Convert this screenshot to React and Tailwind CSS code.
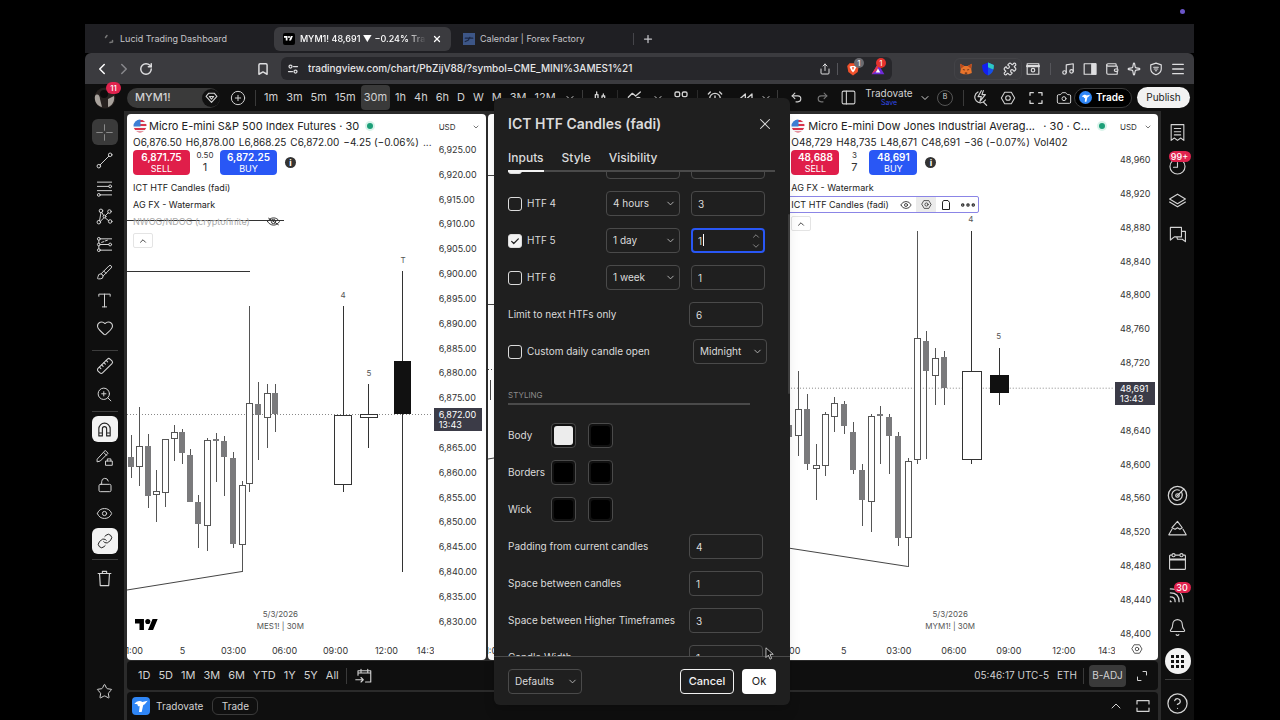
import {
  AlarmClock, Bell, Bookmark, Brush, Camera, ChevronDown, ChevronLeft, ChevronRight, ChevronUp,
  CirclePlus, Eye, Heart, HelpCircle, Layers, Link, LockOpen, Magnet, Menu,
  MessagesSquare, Music, PanelLeft, Puzzle, Redo2, RotateCw, Rss, Ruler, Share, Sparkle,
  Star, Target, Trash2, Undo2, Wallet, X, Plus, ZoomIn, Calendar,
} from 'lucide-react';

const TIMEFRAMES = ['1m', '3m', '5m', '15m', '30m', '1h', '4h', '6h', 'D', 'W', 'M', '3M', '12M'];
const RANGES = ['1D', '5D', '1M', '3M', '6M', 'YTD', '1Y', '5Y', 'All'];

// [x, open/close top, open/close bottom, high, low, filled]
const MES_CANDLES = [
  [4, 343, 353, 321, 364, 1], [12, 332, 353, 293, 372, 0], [21, 332, 382, 320, 394, 1],
  [29, 377, 381, 356, 408, 0], [38, 325, 379, 325, 393, 0], [47, 318, 325, 311, 347, 0],
  [55, 318, 339, 315, 350, 1], [63, 341, 388, 335, 388, 1], [71, 388, 410, 381, 434, 1],
  [80, 326, 412, 324, 437, 0], [89, 325, 327, 319, 368, 1], [97, 327, 343, 322, 382, 1],
  [106, 344, 430, 338, 434, 1], [115, 371, 431, 367, 458, 0], [122, 289, 370, 192, 378, 0],
  [131, 290, 301, 268, 346, 1], [140, 279, 304, 270, 334, 0], [148, 279, 300, 270, 318, 1],
];

const MYM_CANDLES = [
  [4, 311, 323, 290, 340, 1], [13, 295, 322, 257, 342, 0], [22, 295, 350, 280, 356, 1],
  [31, 351, 355, 330, 386, 0], [40, 300, 352, 298, 362, 0], [49, 289, 303, 283, 318, 0],
  [59, 290, 312, 287, 320, 1], [68, 318, 356, 308, 360, 1], [77, 356, 386, 350, 412, 1],
  [86, 302, 388, 300, 418, 0], [95, 300, 302, 292, 350, 1], [104, 303, 322, 300, 360, 1],
  [113, 322, 424, 318, 432, 1], [123, 347, 424, 344, 453, 0], [132, 224, 346, 117, 350, 0],
  [141, 227, 257, 217, 345, 1], [150, 244, 262, 234, 291, 0], [159, 243, 274, 237, 291, 1],
];

const MES_PRICES = ['6,925.00', '6,920.00', '6,915.00', '6,910.00', '6,905.00', '6,900.00', '6,895.00', '6,890.00', '6,885.00', '6,880.00', '6,875.00', '', '6,865.00', '6,860.00', '6,855.00', '6,850.00', '6,845.00', '6,840.00', '6,835.00', '6,830.00'];
const MYM_PRICES = ['48,960', '48,920', '48,880', '48,840', '48,800', '48,760', '48,720', '', '48,640', '48,600', '48,560', '48,520', '48,480', '48,440', '48,400'];

function Glyph({ children, className = 'size-5', w = 1.4 }) {
  return (
    <svg viewBox="0 0 24 24" fill="none" stroke="currentColor" strokeWidth={w} strokeLinecap="round" strokeLinejoin="round" className={className} aria-hidden="true">
      {children}
    </svg>
  );
}

function TvLogo({ className }) {
  return (
    <svg viewBox="0 4 36 18" fill="currentColor" className={className} aria-hidden="true">
      <path d="M14 22H7V11H0V4h14v18zM28 22h-8l7.5-18h8L28 22z" />
      <circle cx="20" cy="8" r="4" />
    </svg>
  );
}

function TradovateLogo({ className }) {
  return (
    <svg viewBox="0 0 24 24" className={className} aria-hidden="true">
      <path fill="#fff" d="M2 9c3-5 9-6 12-3l8-2-4 5c-1 1-3 1-3 3l-2 9H9l1-9c-2 1-3 0-3-2-1-1-3-1-5-1z" />
    </svg>
  );
}

function Flag() {
  return (
    <svg viewBox="0 0 14 14" className="size-[14px] shrink-0" aria-hidden="true">
      <clipPath id="flag"><circle cx="7" cy="7" r="6.5" /></clipPath>
      <g clipPath="url(#flag)">
        <path fill="#f4f4f6" d="M0 0h14v14H0z" />
        <path fill="#d8334a" d="M7 1h7v2H7zM7 5h7v2H7zM0 9h14v2H0zM0 12.500h14V14H0z" />
        <path fill="#3d7fd6" d="M0 0h7.500v7.500H0z" />
      </g>
    </svg>
  );
}

function HexIcon({ className }) {
  return (
    <Glyph className={className} w={1.6}>
      <path d="M7 3.500h10L22 12l-5 8.500H7L2 12z" />
      <circle cx="12" cy="12" r="3.500" />
    </Glyph>
  );
}

function Tool({ label, active, children }) {
  return (
    <button
      aria-label={label}
      className={`flex h-7 w-[26px] shrink-0 items-center justify-center ${active ? 'text-[#222]' : 'text-[#d4d4d4]'}`}
    >
      {active ? <span className="flex size-[26px] items-center justify-center rounded-md bg-[#f2f2f2]">{children}</span> : children}
    </button>
  );
}

function BrowserTabs() {
  return (
    <div className="flex h-[29px] shrink-0 items-center bg-[#1f1f23] text-[9px] text-[#c4c4c8]">
      <div className="flex w-[189px] items-center pl-[18px]">
        <Glyph className="size-3 text-[#777]" w={3}><path d="M5 9l3-4M14 19l5-1v-3" /></Glyph>
        <span className="ml-[5px]">Lucid Trading Dashboard</span>
      </div>
      <div className="flex h-6 w-[177px] items-center rounded-md bg-[#3b3b3f] px-[9px] text-white">
        <span className="flex size-3 items-center justify-center rounded-xs bg-black"><TvLogo className="w-[9px]" /></span>
        <span className="ml-[5px] w-[127px] overflow-hidden font-medium whitespace-nowrap mask-r-from-85%">MYM1! 48,691 ▼ −0.24% Trado</span>
        <button aria-label="Close tab" className="ml-[6px]"><X className="size-[10px]" strokeWidth={3} /></button>
      </div>
      <div className="flex w-[182px] items-center pl-3">
        <span className="flex size-3 items-center justify-center bg-[#3d5687]">
          <Glyph className="size-[10px] text-[#1b2744]" w={3}><path d="M3 10h18M3 18l7-3 4-7" /></Glyph>
        </span>
        <span className="ml-[5px]">Calendar | Forex Factory</span>
      </div>
      <div className="h-3 w-px bg-[#45454a]" />
      <button aria-label="New tab" className="ml-2"><Plus className="size-3" strokeWidth={2.500} /></button>
    </div>
  );
}

function AddressBar() {
  return (
    <div className="flex h-[31px] shrink-0 items-center rounded-t-md bg-[#3b3b3f] text-[#dedee0]">
      <div className="flex w-[196px] items-center pl-[6px]">
        <button aria-label="Back" className="w-[22px]"><ChevronLeft className="mx-auto size-[18px] text-white" /></button>
        <button aria-label="Forward" className="w-[22px]"><ChevronRight className="mx-auto size-[18px] text-[#88888c]" /></button>
        <button aria-label="Reload" className="w-[22px]"><RotateCw className="mx-auto size-[14px]" strokeWidth={2.500} /></button>
        <button aria-label="Bookmark" className="ml-auto mr-[11px]"><Bookmark className="size-[14px]" strokeWidth={2.500} /></button>
      </div>
      <div className="flex h-[23px] w-[611px] items-center rounded-md bg-[#27272b] pl-[6px]">
        <Glyph className="size-3 shrink-0" w={2.500}>
          <circle cx="7" cy="7" r="3" /><path d="M13 7h8M3 17h8" /><circle cx="17" cy="17" r="3" />
        </Glyph>
        <input aria-label="Address" readOnly value="tradingview.com/chart/PbZijV88/?symbol=CME_MINI%3AMES1%21" className="ml-[9px] min-w-0 flex-1 bg-transparent text-[10px] font-medium text-[#e6e6e8] outline-none" />
        <Share className="mr-[6px] size-3" />
        <div className="h-3 w-px bg-[#55555a]" />
        <div className="relative ml-2 w-[25px]">
          <svg viewBox="0 0 24 24" className="size-[14px]" aria-hidden="true">
            <path fill="#f0512b" d="M6 2h12l4 5-2 10-8 6-8-6L2 7z" /><path fill="#fff" d="M6 8l3-1h6l3 1-3 6-3 4-3-4z" /><path fill="#f0512b" d="M10 9h4l-2 5z" />
          </svg>
          <span className="absolute -top-1 left-2 flex size-[10px] items-center justify-center rounded-full bg-[#6b6b70] text-[8px] text-white">1</span>
        </div>
        <div className="relative mr-[6px] w-[15px]">
          <svg viewBox="0 0 24 24" className="size-[14px]" aria-hidden="true">
            <path fill="#6e2ad8" d="M12 3L1 21h22z" /><path fill="#e0364c" d="M12 3L1 21l11-8z" /><path fill="#fff" d="M12 11l-4 7h8z" />
          </svg>
          <span className="absolute -top-1 left-[5px] flex size-[10px] items-center justify-center rounded-full bg-[#e5322d] text-[8px] text-white">1</span>
        </div>
      </div>
      <div className="ml-auto flex items-center pr-[5px]">
        <div className="flex rounded-md border border-[#434347]">
          <span className="flex h-5 w-[22px] items-center justify-center">
            <svg viewBox="0 0 24 24" className="size-[14px]" aria-hidden="true">
              <path fill="#e8742c" d="M2 3l7 4h6l7-4-1 9 1 7-6 2H8l-6-2 1-7z" /><path fill="#5c2b16" d="M6 12l4 1-1 2zM18 12l-4 1 1 2zM10 18h4v2h-4z" /><path fill="#b8481d" d="M2 3l7 4-5 4zM22 3l-7 4 5 4z" />
            </svg>
          </span>
          <span className="flex h-5 w-[22px] items-center justify-center">
            <svg viewBox="0 0 24 24" className="size-[14px]" aria-hidden="true">
              <path fill="#1220f0" d="M12 1v22C5 20 2 16 2 5z" /><path fill="#1650e8" d="M12 1l10 4c0 11-3 15-10 18z" /><path fill="#2fc8c0" d="M12 1l10 4c0 3 0 5-1 8l-9-4z" />
            </svg>
          </span>
          <span className="flex h-5 w-[22px] items-center justify-center"><Puzzle className="size-[14px]" /></span>
        </div>
        <span className="flex w-[22px] justify-center">
          <Glyph className="size-[14px]" w={2}><rect x="2" y="3" width="20" height="18" /><path d="M2 7h20" strokeWidth="4" /><circle cx="12" cy="14" r="3" /></Glyph>
        </span>
        <div className="mx-[6px] h-3 w-px bg-[#55555a]" />
        <button aria-label="Media" className="w-[22px]"><Music className="mx-auto size-[14px]" /></button>
        <button aria-label="Sidebar" className="w-[22px]">
          <Glyph className="mx-auto size-[14px]" w={2}><rect x="2" y="3" width="20" height="18" /><path d="M15 3h7v18h-7z" fill="currentColor" /></Glyph>
        </button>
        <button aria-label="Wallet" className="w-[22px]"><Wallet className="mx-auto size-[14px]" /></button>
        <button aria-label="Assistant" className="w-[22px]"><Sparkle className="mx-auto size-[14px]" /></button>
        <button aria-label="VPN" className="w-[22px]">
          <Glyph className="mx-auto size-[14px]" w={2}><path d="M12 2l9 3v7c0 5-4 8-9 10-5-2-9-5-9-10V5zM8 9h8M9 12h6M11 15h2" /></Glyph>
        </button>
        <button aria-label="Menu" className="w-[22px]"><Menu className="mx-auto size-[16px]" /></button>
      </div>
    </div>
  );
}

function ChartToolbar() {
  return (
    <div className="flex h-[27px] shrink-0 items-center bg-[#0f0f0f] text-[11px] text-[#d2d2d2]">
      <div className="relative ml-[9px] size-[22px] shrink-0 overflow-visible">
        <svg viewBox="0 0 22 22" className="size-full" aria-hidden="true">
          <circle cx="11" cy="11" r="10.500" fill="#27211f" /><path fill="#a8a29c" d="M1 9c2-3 5-1 5 3l2 8C3 19 0 14 1 9zM14 12l6-3c1 5-2 10-6 11z" /><circle cx="10" cy="7" r="4" fill="#0d0c0c" />
        </svg>
        <span className="absolute -top-[5px] left-[12px] flex h-3 w-[15px] items-center justify-center rounded-full bg-[#e0234e] text-[8px] font-medium text-white">11</span>
      </div>
      <button className="ml-[11px] flex h-5 w-[93px] shrink-0 items-center justify-between rounded-full bg-[#3a3a3a] pl-2 font-medium">
        MYM1!
        <span className="flex size-[18px] items-center justify-center rounded-full bg-[#111]">
          <Glyph className="size-[13px]" w={2}><path d="M7 4h10l5 6-10 11L2 10z" /><path d="M8 10h8l-4 5z" /></Glyph>
        </span>
      </button>
      <button aria-label="Compare" className="ml-[10px]"><CirclePlus className="size-4" strokeWidth={1.500} /></button>
      <div className="mr-1 ml-[9px] h-4 w-px bg-[#3a3a3a]" />
      <div className="flex w-[304px] shrink-0 items-center">
        {TIMEFRAMES.map((t) => (
          <button key={t} className={t === '30m' ? 'mx-px h-[25px] rounded-sm bg-[#3a3a3a] px-[3px]' : 'h-[25px] px-1'}>{t}</button>
        ))}
      </div>
      <ChevronDown className="size-3" />
      <div className="ml-[6px] h-4 w-px bg-[#3a3a3a]" />
      <span className="flex w-[34px] justify-center">
        <Glyph className="size-4" w={2}><path d="M5 7h4v10H5zM15 9h4v6h-4zM7 3v4M7 17v4M17 6v3M17 15v3" /></Glyph>
      </span>
      <div className="h-4 w-px bg-[#2a2a2a]" />
      <span className="flex w-[34px] justify-center">
        <Glyph className="size-4" w={2}><path d="M2 11l6-6 5 4 7-6" /><circle cx="17" cy="14" r="3" /></Glyph>
      </span>
      <ChevronDown className="size-3" />
      <span className="flex w-[33px] justify-center">
        <Glyph className="size-4" w={2}><rect x="3" y="3" width="7" height="7" rx="2" /><rect x="14" y="3" width="7" height="7" rx="2" /><rect x="3" y="14" width="7" height="7" /></Glyph>
      </span>
      <div className="h-4 w-px bg-[#2a2a2a]" />
      <span className="flex w-[34px] justify-center"><AlarmClock className="size-4" /></span>
      <span className="flex w-[28px] justify-center">
        <Glyph className="size-4" w={2}><path d="M11 6l-8 7h8zM21 6l-8 7h8z" /></Glyph>
      </span>
      <ChevronDown className="size-3" />
      <div className="mx-[5px] h-4 w-px bg-[#3a3a3a]" />
      <button aria-label="Undo" className="w-[26px]"><Undo2 className="mx-auto size-[13px]" /></button>
      <button aria-label="Redo" className="w-[26px]"><Redo2 className="mx-auto size-[13px] text-[#777]" /></button>

      <div className="ml-auto flex shrink-0 items-center pr-1">
        <PanelLeft className="size-[17px]" strokeWidth={1.500} />
        <button className="ml-2 flex w-12 flex-col items-center text-[10px] leading-[11px]">
          Tradovate<span className="text-[7px] leading-[8px] text-[#2f49e8]">Save</span>
        </button>
        <ChevronDown className="ml-[6px] size-3" />
        <span className="ml-[6px] flex size-4 items-center justify-center rounded-full border border-[#555] text-[7px]">B</span>
        <div className="ml-[10px] mr-[2px] h-4 w-px bg-[#3a3a3a]" />
        <button aria-label="Replay" className="w-7">
          <Glyph className="mx-auto size-4" w={1.800}><path d="M9 3a8.500 8.500 0 1 0 11 12M17 18l5 5M14 1L9 10h5l-2 7 8-10h-5l2-6" /></Glyph>
        </button>
        <button aria-label="Settings" className="w-7"><HexIcon className="mx-auto size-4" /></button>
        <button aria-label="Fullscreen" className="w-7">
          <Glyph className="mx-auto size-4" w={2}><path d="M3 8V4h5M16 4h5v4M21 16v4h-5M8 20H3v-4" /></Glyph>
        </button>
        <button aria-label="Snapshot" className="-mr-1 w-7"><Camera className="mx-auto size-4" strokeWidth={1.500} /></button>
        <button className="flex h-5 w-[58px] items-center rounded-full border border-[#3a3a3a] bg-black pl-1 text-[10px] font-semibold text-white">
          <span className="mr-1 flex size-[13px] items-center justify-center rounded-full bg-[#2f86f6]"><TradovateLogo className="size-[10px]" /></span>
          Trade
        </button>
        <button className="ml-[5px] h-[21px] w-[53px] rounded-full bg-[#f2f2f2] text-[10px] text-[#222]">Publish</button>
      </div>
    </div>
  );
}

function DrawingTools() {
  const s = 'size-[17px]';
  return (
    <div className="flex w-[39px] shrink-0 flex-col items-center bg-[#0f0f0f] pt-[7px]">
      <button aria-label="Cursor" className="flex h-7 items-center">
        <span className="flex size-[26px] items-center justify-center rounded-md bg-[#3a3a3a] text-[#8c8c8c]">
          <Glyph className={s}><path d="M12 1v8M12 15v8M1 12h8M15 12h8" /></Glyph>
        </span>
      </button>
      <Tool label="Trend line"><Glyph className={s}><path d="M6 18L18 6" /><circle cx="4" cy="20" r="2.500" /><circle cx="20" cy="4" r="2.500" /></Glyph></Tool>
      <Tool label="Fibonacci"><Glyph className={s}><path d="M2 3h20M2 9h16M2 15h20M6 21h16" /><circle cx="20" cy="9" r="2" /><circle cx="4" cy="21" r="2" /></Glyph></Tool>
      <Tool label="Patterns"><Glyph className={s}><circle cx="4" cy="20" r="2.500" /><circle cx="7" cy="4" r="2.500" /><circle cx="19" cy="5" r="2.500" /><circle cx="20" cy="19" r="2.500" /><circle cx="12" cy="12" r="2" /><path d="M5 18L7 6.500M8 6l3 5M17 7l-4 4M6 19l5-5M13 14l5 4" /></Glyph></Tool>
      <Tool label="Forecast"><Glyph className={s}><path d="M6 4h16M6 20h16M4 6v4M4 14v4M6 12h12" strokeDasharray="none" /><circle cx="4" cy="4" r="2" /><circle cx="4" cy="12" r="2" /><circle cx="4" cy="20" r="2" /><circle cx="20" cy="12" r="2" /><path d="M8 9l3-1M13 7l3-1" /></Glyph></Tool>
      <Tool label="Brush"><Brush className={s} strokeWidth={1.400} /></Tool>
      <Tool label="Text"><Glyph className={s}><path d="M4 6V3h16v3M12 3v18M9 21h6" /></Glyph></Tool>
      <Tool label="Icons"><Heart className="size-[18px]" strokeWidth={1.400} /></Tool>
      <div className="mt-2 mb-px h-px w-[26px] shrink-0 bg-[#3d3d3d]" />
      <Tool label="Measure"><Ruler className="size-[18px] -scale-x-100" strokeWidth={1.400} /></Tool>
      <Tool label="Zoom in"><ZoomIn className={s} strokeWidth={1.400} /></Tool>
      <div className="my-[3px] h-px w-[26px] shrink-0 bg-[#3d3d3d]" />
      <Tool label="Magnet" active><Glyph className="size-[17px]" w={1.600}><path d="M4 21V11a8 8 0 0 1 16 0v10h-5V11a3 3 0 0 0-6 0v10zM4 17h5M15 17h5" /></Glyph></Tool>
      <Tool label="Stay in drawing mode">
        <Glyph className={s}><path d="M2 14L13 2l4 4L6 17l-4 1zM11 5l4 4" /><rect x="14" y="17" width="9" height="6" /><path d="M16 17v-3h5v3" /></Glyph>
      </Tool>
      <Tool label="Lock drawings"><LockOpen className="size-4" strokeWidth={1.500} /></Tool>
      <Tool label="Hide drawings"><Eye className={s} strokeWidth={1.400} /></Tool>
      <Tool label="Link" active><Link className="size-4" strokeWidth={1.500} /></Tool>
      <div className="my-1 h-px w-[26px] shrink-0 bg-[#3d3d3d]" />
      <Tool label="Remove">
        <Glyph className={s} w={1.600}><path d="M3 5h18M9 5V2h6v3M5 5l1 17h12l1-17" /></Glyph>
      </Tool>
      <div className="mt-auto mb-[15px]"><Tool label="Favorites"><Star className={s} strokeWidth={1.400} /></Tool></div>
    </div>
  );
}

function SideWidgets() {
  const s = 'size-[19px]';
  return (
    <div className="flex w-[33px] shrink-0 flex-col justify-between bg-[#0f0f0f] pt-[7px] pb-[3px]">
      <div className="flex flex-col items-center gap-[6px]">
        <Tool label="Watchlist"><Glyph className={s}><path d="M4 2h16v20l-4-3-4 3-4-3-4 3zM8 7h8M8 11h8M8 15h8" /></Glyph></Tool>
        <div className="relative">
          <Tool label="Alerts"><Glyph className={s}><circle cx="12" cy="12" r="9.500" /><path d="M12 7v6H7" /></Glyph></Tool>
          <span className="absolute -top-px left-1 flex h-[11px] w-[22px] items-center justify-center rounded-full bg-[#e0234e] text-[9px] font-medium text-white">99+</span>
        </div>
        <Tool label="Object tree">
          <Glyph className={s}><path d="M12 4l10 6-10 6L2 10zM2 14l10 6 10-6" /></Glyph>
        </Tool>
        <Tool label="Chat"><Glyph className={s}><path d="M3 3h14v12H8l-5 4zM17 8h5v13l-4-3h-6l-1-3" /></Glyph></Tool>
      </div>
      <div className="flex flex-col items-center gap-[5px]">
        <Tool label="Screener"><Glyph className="size-[21px]"><circle cx="12" cy="12" r="10.500" /><path d="M17 9a6 6 0 1 1-3-3M12 12l7-7" /><circle cx="12" cy="12" r="2" /></Glyph></Tool>
        <Tool label="Pine"><Glyph className={s}><path d="M12 3l6 8-3 2-3-2-3 2-4-2zM5 13l-4 7h22l-4-7" /></Glyph></Tool>
        <Tool label="Calendar"><Glyph className={s}><rect x="2" y="4" width="20" height="18" rx="1" /><path d="M2 9h20M2 10h20" /><circle cx="7" cy="4" r="2" fill="#0f0f0f" /><circle cx="17" cy="4" r="2" fill="#0f0f0f" /></Glyph></Tool>
        <div className="relative">
          <Tool label="News"><Glyph className={s} w={1.600}><path d="M3 20v1h1M3 15c4 0 6 2 6 6M3 10c7 0 11 4 11 11M3 5c10 0 16 6 16 16" /></Glyph></Tool>
          <span className="absolute top-[2px] left-[9px] flex h-[11px] w-[17px] items-center justify-center rounded-full bg-[#e0234e] text-[9px] font-medium text-white">30</span>
        </div>
        <Tool label="Notifications"><Bell className={s} strokeWidth={1.400} /></Tool>
        <button aria-label="Products" className="mt-[2px] flex size-[26px] shrink-0 items-center justify-center rounded-full bg-[#f2f2f2]">
          <svg viewBox="0 0 15 15" className="size-[15px]" fill="#111" aria-hidden="true">
            <path d="M1 1h3v3H1zM6 1h3v3H6zM11 1h3v3h-3zM1 6h3v3H1zM6 6h3v3H6zM11 6h3v3h-3zM1 11h3v3H1zM6 11h3v3H6zM11 11h3v3h-3z" />
          </svg>
        </button>
        <div className="mb-1 h-px w-[26px] shrink-0 bg-[#3d3d3d]" />
        <Tool label="Help"><HelpCircle className="size-[23px]" strokeWidth={1.300} /></Tool>
      </div>
    </div>
  );
}

function Candles({ data, color = '#555' }) {
  return data.map(([x, top, bottom, high, low, filled]) => (
    <g key={x} stroke={color} shapeRendering="crispEdges">
      <path d={`M${x + 0.5} ${high}V${top}M${x + 0.5} ${bottom}V${low}`} />
      <rect x={x - 2.5} y={top + 0.5} width={filled ? 5 : 6} height={Math.max(bottom - top - 1, 1)} fill={filled ? '#7a7a7c' : '#fff'} stroke={filled ? '#7a7a7c' : '#555'} />
    </g>
  ));
}

function QuoteButtons({ sell, buy, spread, size, wide }) {
  const w = wide ? 'w-[57px]' : 'w-12';
  return (
    <div className="flex h-[25px] items-center text-center text-[9px] leading-[11px] text-white">
      <button className={`h-full rounded-sm bg-[#e01e4a] ${w}`}><b className="block text-[10px] font-semibold">{sell}</b>SELL</button>
      <div className="w-[30px] text-[#333]"><span className="block text-[8px] leading-[10px]">{spread}</span><span className="block text-[11px] leading-[15px]">{size}</span></div>
      <button className={`h-full rounded-sm bg-[#2957f5] ${w}`}><b className="block text-[10px] font-semibold">{buy}</b>BUY</button>
      <span className="ml-2 flex size-[11px] items-center justify-center rounded-full bg-[#333] text-[9px] font-bold">i</span>
    </div>
  );
}

function CollapseButton() {
  return (
    <button aria-label="Collapse legend" className="mt-[3px] flex h-[15px] w-5 items-center justify-center rounded-xs border border-[#e4e4e4] bg-white text-[#222]">
      <ChevronUp className="size-[10px]" />
    </button>
  );
}

function LiveDot() {
  return (
    <span className="ml-[6px] flex size-[10px] shrink-0 items-center justify-center rounded-full bg-[#d9f3ea]"><i className="size-[6px] rounded-full bg-[#1c9f78]" /></span>
  );
}

function PriceAxis({ prices, className, last, lastClass }) {
  return (
    <div className={`relative flex shrink-0 flex-col text-[9px] leading-3 text-[#333] ${className}`}>
      <button className="flex h-[26px] items-center justify-between pr-[6px] pl-[5px] text-[8px]">USD <ChevronDown className="size-2" /></button>
      {prices}
      <div className={`absolute left-0 flex h-[23px] flex-col justify-center bg-[#3b3b47] pl-[5px] leading-[10px] text-white ${lastClass}`}>
        <span>{last}</span><span>13:43</span>
      </div>
    </div>
  );
}

function Watermark({ symbol }) {
  return (
    <div className="absolute inset-x-0 bottom-7 text-center text-[8px] leading-3 text-[#555]">5/3/2026<br />{symbol} | 30M</div>
  );
}

function MesPane() {
  return (
    <section className="flex min-w-0 overflow-hidden rounded-sm bg-white">
      <div className="relative flex min-w-0 flex-1 flex-col">
        <svg viewBox="0 0 306 546" preserveAspectRatio="xMinYMin meet" className="absolute inset-0 h-full w-full" fill="none" aria-hidden="true">
          <path d="M0 157.500H123" stroke="#333" />
          <path d="M0 476L115 457.500" stroke="#444" />
          <path d="M0 300.500H306" stroke="#888" strokeDasharray="1 2" />
          <Candles data={MES_CANDLES} />
          <g stroke="#333" shapeRendering="crispEdges">
            <path d="M216.500 192V378M241.500 270V334M275.500 157V458" />
            <rect x="207.500" y="301.500" width="17" height="69" fill="#fff" />
            <rect x="233.500" y="300.500" width="17" height="3" fill="#fff" />
            <rect x="267" y="247" width="17" height="53" fill="#111" stroke="none" />
          </g>
          <g fill="#555" fontSize="8" textAnchor="middle">
            <text x="216" y="184">4</text><text x="242" y="262">5</text><text x="276" y="149">T</text>
          </g>
          <path d="M0 106.500H157" stroke="#333" />
        </svg>
        <div className="relative w-[354px] pt-1 pl-[6px] text-[#222]">
          <div className="flex h-4 items-center text-[11px] whitespace-nowrap">
            <Flag /><span className="ml-[2px]">Micro E-mini S&amp;P 500 Index Futures · 30</span>
            <LiveDot />
          </div>
          <div className="flex h-4 items-center gap-1 text-[10px] whitespace-nowrap">
            <span>O6,876.50</span><span>H6,878.00</span><span>L6,868.25</span><span>C6,872.00</span><span>−4.25 (−0.06%)</span><span>...</span>
          </div>
          <QuoteButtons sell="6,871.75" buy="6,872.25" spread="0.50" size="1" wide />
          <div className="mt-1 text-[9px] leading-[17px]">
            <p>ICT HTF Candles (fadi)</p>
            <p>AG FX - Watermark</p>
            <p className="flex items-center text-[#aaa]">
              <span className="w-[134px]">NWOG/NDOG (cryptofinite)</span>
              <Glyph className="size-[13px] text-[#333]" w={1.800}><path d="M1 12c5-9 17-9 22 0-5 9-17 9-22 0zM3 6l18 12" /><circle cx="12" cy="12" r="4" /></Glyph>
            </p>
          </div>
          <CollapseButton />
        </div>
        <TvLogo className="absolute bottom-[30px] left-2 w-[23px] text-black" />
        <Watermark symbol="MES1!" />
        <div className="relative mt-auto flex h-[18px] items-center overflow-hidden text-center text-[9px] text-[#333]">
          <span className="-ml-[21px] w-[51px] shrink-0">21:00</span>
          {['5', '03:00', '06:00', '09:00', '12:00'].map((t) => <span key={t} className="w-[51px] shrink-0">{t}</span>)}
          <span className="w-[33px] shrink-0">14:30</span>
        </div>
      </div>
      <PriceAxis
        className="w-[52px]" last="6,872.00" lastClass="top-[294px] w-12"
        prices={
          <div className="mt-1 mb-8 flex flex-1 flex-col justify-between pl-[5px]">
            {MES_PRICES.map((p, i) => <span key={i} className="h-3">{p}</span>)}
          </div>
        }
      />
    </section>
  );
}

// mostly covered by the settings dialog
function MiddlePane() {
  return (
    <section className="relative flex min-w-0 flex-col overflow-hidden rounded-sm bg-white pl-[6px]">
      <svg viewBox="0 0 12 546" className="absolute top-0 left-0 h-full w-3" fill="none" stroke="#444" aria-hidden="true">
        <path d="M0 61.500H12M0 190.500H12M2.500 266V286M0 345l12-2" /><path d="M0 255.500H12" strokeDasharray="1 2" />
      </svg>
      <div className="relative mt-10 h-[22px] w-12 rounded-sm bg-[#e01e4a]" />
      <span className="mt-auto -ml-[14px] h-[18px] text-[9px] leading-[18px] text-[#333]">21:00</span>
    </section>
  );
}

function MymPane() {
  return (
    <section className="flex min-w-0 overflow-hidden rounded-sm bg-white">
      <div className="relative flex min-w-0 flex-1 flex-col">
        <svg viewBox="0 0 330 546" preserveAspectRatio="xMinYMin meet" className="absolute inset-0 h-full w-full" fill="none" aria-hidden="true">
          <path d="M0 434L123 453" stroke="#444" />
          <path d="M0 274.500H330" stroke="#888" strokeDasharray="1 2" />
          <Candles data={MYM_CANDLES} />
          <g stroke="#333" shapeRendering="crispEdges">
            <path d="M186.500 117V350M214.500 234V291" />
            <rect x="177.500" y="257.500" width="19" height="88" fill="#fff" />
            <rect x="205" y="261" width="19" height="18" fill="#111" stroke="none" />
          </g>
          <g fill="#555" fontSize="8" textAnchor="middle">
            <text x="186" y="108">4</text><text x="214" y="225">5</text>
          </g>
        </svg>
        <div className="relative pt-1 pl-[6px] text-[#222]">
          <div className="flex h-4 items-center text-[11px] whitespace-nowrap">
            <Flag /><span className="ml-[3px] w-[235px]">Micro E-mini Dow Jones Industrial Averag...</span><span className="w-[48px]">· 30 · C...</span>
            <LiveDot />
          </div>
          <div className="flex h-4 items-center gap-1 text-[10px] whitespace-nowrap">
            <span>O48,729</span><span>H48,735</span><span>L48,671</span><span>C48,691</span><span>−36 (−0.07%)</span><span>Vol402</span>
          </div>
          <QuoteButtons sell="48,688" buy="48,691" spread="3" size="7" />
          <div className="mt-1 text-[9px] leading-[17px]">
            <p>AG FX - Watermark</p>
            <p className="-ml-1 flex h-[17px] w-[192px] items-center rounded-xs border border-[#8b85e6] bg-white pl-[3px] leading-[15px] whitespace-nowrap">
              <span className="w-[109px]">ICT HTF Candles (fadi)</span>
              <Eye className="mr-1 size-3" strokeWidth={1.600} />
              <span className="flex h-[15px] w-5 items-center justify-center bg-[#ebebeb]"><HexIcon className="size-[11px]" /></span>
              <Glyph className="mx-1 size-3" w={2}><path d="M8 3h8l3 4v14H5V7z" /></Glyph>
              <Glyph className="ml-[5px] size-[14px]" w={2}><circle cx="3" cy="12" r="2" /><circle cx="12" cy="12" r="2" /><circle cx="21" cy="12" r="2" /></Glyph>
            </p>
          </div>
          <CollapseButton />
        </div>
        <Watermark symbol="MYM1!" />
        <div className="relative mt-auto flex h-[18px] items-center overflow-hidden text-center text-[9px] text-[#333]">
          <span className="-ml-6 w-[55px] shrink-0">21:00</span>
          {['5', '03:00', '06:00', '09:00', '12:00'].map((t) => <span key={t} className="w-[55px] shrink-0">{t}</span>)}
          <span className="w-[37px] shrink-0">14:30</span>
        </div>
      </div>
      <PriceAxis
        className="w-[43px]" last="48,691" lastClass="top-[268px] w-10"
        prices={
          <>
            <div className="mt-[14px] flex flex-1 flex-col justify-between pl-[5px]">
              {MYM_PRICES.map((p, i) => <span key={i} className="h-3">{p}</span>)}
            </div>
            <button aria-label="Scale settings" className="mb-[3px] flex h-[17px] items-center justify-center"><HexIcon className="size-3" /></button>
          </>
        }
      />
    </section>
  );
}

function BottomBars() {
  return (
    <>
      <div className="flex h-[29px] shrink-0 items-center rounded-sm bg-[#0f0f0f] pr-[10px] pl-[7px] text-[11px] text-[#d2d2d2]">
        {RANGES.map((r) => <button key={r} className="px-1">{r}</button>)}
        <div className="mr-2 ml-[3px] h-4 w-px bg-[#3a3a3a]" />
        <button aria-label="Go to date">
          <Glyph className="size-[18px]" w={1.500}><path d="M4 11V5h17v15h-7M4 8h17M8 3v4M17 3v4M1 17h10M8 14l3 3-3 3" /></Glyph>
        </button>
        <div className="ml-auto flex items-center text-[10px]">
          <span>05:46:17 UTC-5</span>
          <span className="ml-2">ETH</span>
          <div className="mr-[5px] ml-[6px] h-4 w-px bg-[#3a3a3a]" />
          <button className="h-[22px] w-[37px] rounded-sm bg-[#3a3a3a]">B-ADJ</button>
          <button aria-label="Maximize" className="ml-[10px]"><Glyph className="size-3" w={2}><path d="M14 3h7v7M3 14v7h7" /></Glyph></button>
        </div>
      </div>
      <div className="mt-[2px] flex h-7 shrink-0 items-center rounded-t-sm bg-[#0f0f0f] pr-[7px] pl-[5px] text-[10px] text-[#d2d2d2]">
        <span className="flex size-[18px] items-center justify-center rounded-sm bg-[#2f86f6]"><TradovateLogo className="size-4" /></span>
        <span className="ml-[6px]">Tradovate</span>
        <button className="ml-[9px] h-[18px] w-[46px] rounded-md border border-[#3a3a3a]">Trade</button>
        <button aria-label="Expand panel" className="ml-auto"><ChevronUp className="size-4" strokeWidth={1.500} /></button>
        <button aria-label="Maximize panel" className="ml-[11px]"><Glyph className="size-4" w={1.800}><path d="M3 9V4h18v5M3 15v5h18v-5" /></Glyph></button>
      </div>
    </>
  );
}

function Select({ label, value }) {
  return (
    <span className="relative inline-flex h-[25px] w-[74px] shrink-0">
      <select aria-label={label} defaultValue={value} className="w-full appearance-none rounded-sm border border-[#4a4a4a] bg-transparent pl-[6px] text-[10px] text-[#dbdbdb]">
        <option>{value}</option>
      </select>
      <ChevronDown className="pointer-events-none absolute top-[7px] right-1 size-[11px] text-[#bbb]" />
    </span>
  );
}

const fieldClass = 'h-[25px] w-[74px] shrink-0 rounded-sm border border-[#4a4a4a] bg-transparent pl-[6px] text-[10px] text-[#dbdbdb] outline-none';

function Check({ id, checked }) {
  return (
    <span className="relative mr-[5px] inline-flex size-[14px] shrink-0">
      <input id={id} type="checkbox" defaultChecked={checked} className="size-full appearance-none rounded-[3px] border border-[#dbdbdb] checked:bg-[#f2f2f2]" />
      {checked && <Glyph className="pointer-events-none absolute inset-[2px] size-[10px] text-[#222]" w={3}><path d="M4 13l5 5L20 7" /></Glyph>}
    </span>
  );
}

function HtfRow({ n, tf, count, checked, focused }) {
  const id = `htf-${n}`;
  return (
    <div className="flex h-[37px] items-center">
      <div className="flex w-[98px] items-center"><Check id={id} checked={checked} /><label htmlFor={id}>HTF {n}</label></div>
      <Select label={`HTF ${n} timeframe`} value={tf} />
      <span className="relative ml-[11px] flex">
        <input aria-label={`HTF ${n} candles`} defaultValue={count} className={focused ? 'h-[25px] w-[74px] rounded-sm border-2 border-[#2957f5] bg-transparent pl-[5px] text-[10px] text-[#dbdbdb] outline-none' : fieldClass} />
        {focused && (
          <>
            <i className="absolute top-[6px] left-3 h-3 w-px bg-white" />
            <span className="absolute top-[3px] right-1 flex flex-col text-[#999]"><ChevronUp className="size-[10px]" /><ChevronDown className="size-[10px]" /></span>
          </>
        )}
      </span>
    </div>
  );
}

function NumberRow({ id, label, value }) {
  return (
    <div className="flex h-[37px] items-center">
      <label htmlFor={id} className="w-[181px] whitespace-nowrap">{label}</label>
      <input id={id} defaultValue={value} className={fieldClass} />
    </div>
  );
}

function SwatchRow({ label, light }) {
  return (
    <div className="flex h-[37px] items-center">
      <span className="w-[43px]">{label}</span>
      {[light ? 'bg-[#ececec]' : 'bg-black', 'bg-black'].map((c, i) => (
        <button key={i} aria-label={`${label} color ${i + 1}`} className="mr-3 flex size-[25px] items-center justify-center rounded-sm border border-[#4a4a4a] bg-[#111]">
          <span className={`size-[19px] rounded-[3px] ${c}`} />
        </button>
      ))}
    </div>
  );
}

function SettingsDialog() {
  return (
    <div role="dialog" aria-label="ICT HTF Candles (fadi)" className="absolute top-[74px] left-[409px] flex h-[607px] w-[296px] flex-col rounded-md bg-[#1f1f1f] text-[10px] text-[#dbdbdb] shadow-lg">
      <div className="flex h-[51px] shrink-0 items-center justify-between pr-4 pl-[14px]">
        <h2 className="text-[14px] font-semibold">ICT HTF Candles (fadi)</h2>
        <button aria-label="Close"><X className="size-[18px]" strokeWidth={1.400} /></button>
      </div>
      <div className="mr-[15px] ml-[14px] flex h-[23px] shrink-0 gap-[18px] border-b-2 border-[#4a4a4a] text-[12px] font-medium">
        <button className="-mb-[2px] border-b-2 border-[#f2f2f2] pb-[6px]">Inputs</button>
        <button className="pb-1">Style</button>
        <button className="pb-1">Visibility</button>
      </div>
      <div className="relative min-h-0 flex-1 overflow-hidden border-b border-[#4a4a4a] pl-[14px]">
        <div className="-mt-6">
          <HtfRow n={3} tf="1 hour" count="6" checked />
          <HtfRow n={4} tf="4 hours" count="3" />
          <HtfRow n={5} tf="1 day" count="1" checked focused />
          <HtfRow n={6} tf="1 week" count="1" />
          <NumberRow id="limit" label="Limit to next HTFs only" value="6" />
          <div className="flex h-[37px] items-center">
            <div className="flex w-[185px] items-center"><Check id="daily-open" /><label htmlFor="daily-open">Custom daily candle open</label></div>
            <Select label="Daily candle open" value="Midnight" />
          </div>
        </div>
        <h3 className="mt-4 mr-10 mb-3 flex h-[19px] items-center border-b-2 border-[#4a4a4a] text-[8px] text-[#8c8c8c]">STYLING</h3>
        <SwatchRow label="Body" light />
        <SwatchRow label="Borders" />
        <SwatchRow label="Wick" />
        <NumberRow id="padding" label="Padding from current candles" value="4" />
        <NumberRow id="space" label="Space between candles" value="1" />
        <NumberRow id="space-htf" label="Space between Higher Timeframes" value="3" />
        <NumberRow id="width" label="Candle Width" value="1" />
        <div className="absolute top-[42px] right-0 h-[180px] w-[2px] rounded-full bg-[#3d3d3d]" />
      </div>
      <div className="flex h-12 shrink-0 items-center pr-[14px] pl-[14px]">
        <Select label="Defaults" value="Defaults" />
        <button className="ml-auto h-[25px] w-[54px] rounded-sm border border-[#f2f2f2] text-[11px] font-medium text-[#f2f2f2]">Cancel</button>
        <button className="ml-2 h-[25px] w-[34px] rounded-sm bg-white text-[11px] text-[#222]">Ok</button>
      </div>
      <svg viewBox="0 0 12 16" className="absolute top-[549px] left-[271px] h-[13px] w-[10px]" aria-hidden="true">
        <path d="M1 1v12l3-3 2 5 2-1-2-5h4z" fill="#111" stroke="#ddd" />
      </svg>
    </div>
  );
}

export default function App() {
  return (
    <div className="relative flex h-screen flex-col overflow-hidden bg-black pt-6 pr-[86px] pl-[85px] font-[Inter,sans-serif]">
      <span className="absolute top-[9px] right-[95px] size-[5px] rounded-full bg-[#6a55c8]" />
      <div className="relative flex min-h-0 flex-1 flex-col">
        <BrowserTabs />
        <AddressBar />
        <ChartToolbar />
        <div className="flex min-h-0 flex-1 bg-[#2b2b2b]">
          <DrawingTools />
          <main className="flex min-w-0 flex-1 flex-col pr-[3px] pl-[3px]">
            <div className="grid min-h-0 flex-1 grid-cols-[359fr_296fr_373fr] gap-[2px] pt-[3px] pb-px">
              <MesPane />
              <MiddlePane />
              <MymPane />
            </div>
            <BottomBars />
          </main>
          <SideWidgets />
        </div>
        <SettingsDialog />
      </div>
    </div>
  );
}
